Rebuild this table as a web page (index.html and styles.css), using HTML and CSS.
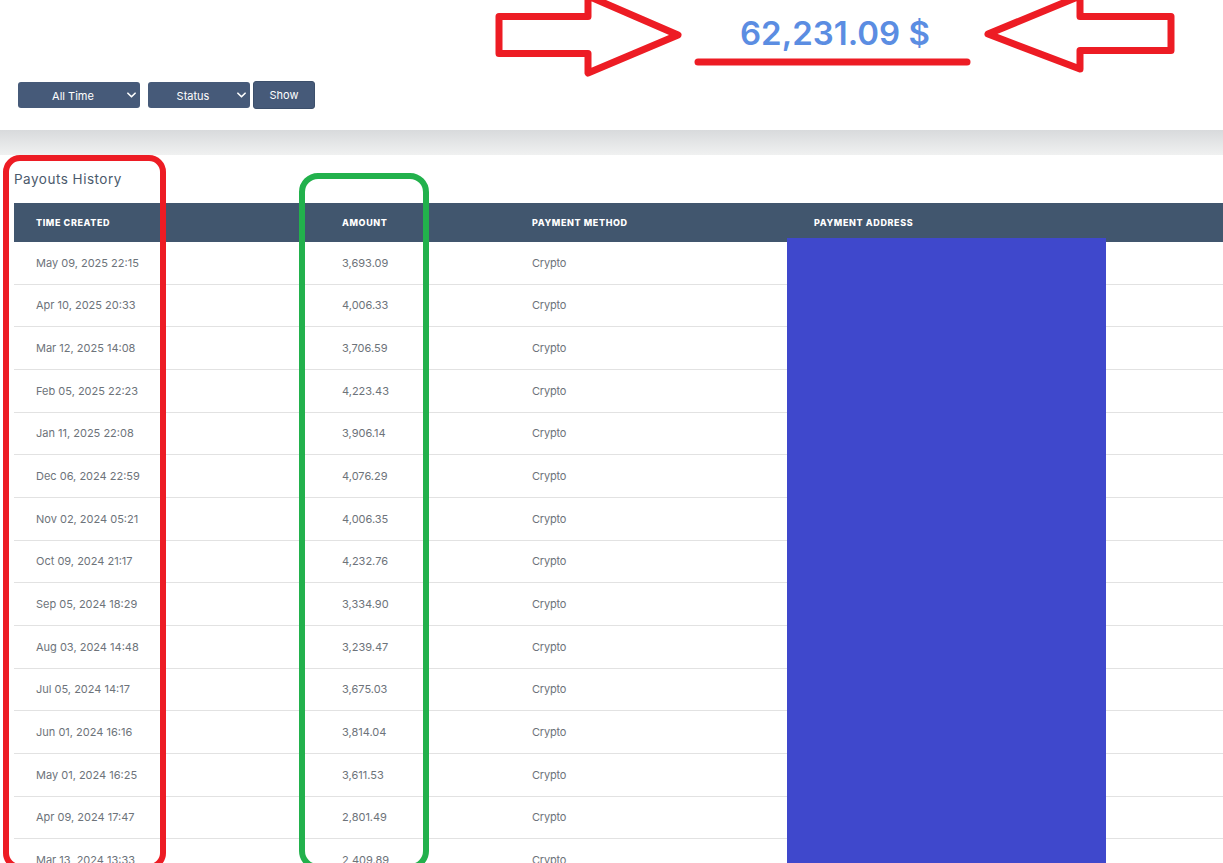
FILE: index.html
```html
<!DOCTYPE html>
<html>
<head>
<meta charset="utf-8">
<link rel="stylesheet" href="styles.css">
</head>
<body>
<div class="top">
  <div class="total-row"><span class="total">62,231.09 $</span></div>
  <div class="filters">
    <div class="select sel-time">All Time <svg class="chev" viewBox="0 0 10 6"><path d="M1 1l4 4 4-4" fill="none" stroke="#fff" stroke-width="1.8" stroke-linecap="round" stroke-linejoin="round"/></svg></div>
    <div class="select sel-status">Status <svg class="chev" viewBox="0 0 10 6"><path d="M1 1l4 4 4-4" fill="none" stroke="#fff" stroke-width="1.8" stroke-linecap="round" stroke-linejoin="round"/></svg></div>
    <button class="btn">Show</button>
  </div>
</div>
<div class="band"></div>
<div class="content">
  <h2 class="title">Payouts History</h2>
  <table class="tbl">
    <colgroup><col class="c1"><col class="c2"><col class="c3"><col></colgroup>
    <thead><tr><th>Time Created</th><th>Amount</th><th>Payment Method</th><th>Payment Address</th></tr></thead>
    <tbody>
      <tr><td>May 09, 2025 22:15</td><td>3,693.09</td><td class="m">Crypto</td><td></td></tr>
      <tr><td>Apr 10, 2025 20:33</td><td>4,006.33</td><td class="m">Crypto</td><td></td></tr>
      <tr><td>Mar 12, 2025 14:08</td><td>3,706.59</td><td class="m">Crypto</td><td></td></tr>
      <tr><td>Feb 05, 2025 22:23</td><td>4,223.43</td><td class="m">Crypto</td><td></td></tr>
      <tr><td>Jan 11, 2025 22:08</td><td>3,906.14</td><td class="m">Crypto</td><td></td></tr>
      <tr><td>Dec 06, 2024 22:59</td><td>4,076.29</td><td class="m">Crypto</td><td></td></tr>
      <tr><td>Nov 02, 2024 05:21</td><td>4,006.35</td><td class="m">Crypto</td><td></td></tr>
      <tr><td>Oct 09, 2024 21:17</td><td>4,232.76</td><td class="m">Crypto</td><td></td></tr>
      <tr><td>Sep 05, 2024 18:29</td><td>3,334.90</td><td class="m">Crypto</td><td></td></tr>
      <tr><td>Aug 03, 2024 14:48</td><td>3,239.47</td><td class="m">Crypto</td><td></td></tr>
      <tr><td>Jul 05, 2024 14:17</td><td>3,675.03</td><td class="m">Crypto</td><td></td></tr>
      <tr><td>Jun 01, 2024 16:16</td><td>3,814.04</td><td class="m">Crypto</td><td></td></tr>
      <tr><td>May 01, 2024 16:25</td><td>3,611.53</td><td class="m">Crypto</td><td></td></tr>
      <tr><td>Apr 09, 2024 17:47</td><td>2,801.49</td><td class="m">Crypto</td><td></td></tr>
      <tr><td>Mar 13, 2024 13:33</td><td>2,409.89</td><td class="m">Crypto</td><td></td></tr>
    </tbody>
  </table>
</div>

<div class="redact"></div>
<div class="mark mark-red"></div>
<div class="mark mark-green"></div>
<svg class="arrows" width="1223" height="90" viewBox="0 0 1223 90">
  <g fill="none" stroke="#ed1c24" stroke-width="7" stroke-linejoin="round" stroke-linecap="round">
    <polygon points="499,16.5 588,16.5 588,-4 678,35 588,73 588,53.5 499,53.5"/>
    <polygon points="988,34 1080,-4 1080,16.5 1171,16.5 1171,50.5 1080,50.5 1080,69"/>
    <line x1="698" y1="62" x2="967" y2="62"/>
  </g>
</svg>
</body>
</html>
```

FILE: styles.css
```css
html, body {
  margin: 0;
  padding: 0;
  overflow: hidden;
  background: #fff;
  font-family: "Inter", "Noto Sans", sans-serif;
}
body {
  position: relative;
  height: 863px;
}
.top {
  height: 130px;
  box-sizing: border-box;
}
.total-row {
  display: flex;
  justify-content: center;
  padding-left: 447px;
  padding-top: 13px;
  height: 40px;
}
.total {
  font-size: 33px;
  font-weight: 600;
  color: #5b8de2;
  line-height: 40px;
  letter-spacing: 0;
}
.filters {
  display: flex;
  align-items: center;
  gap: 0;
  padding-left: 18px;
  margin-top: 28px;
}
.select {
  position: relative;
  height: 26px;
  background: #465a79;
  border-radius: 3px;
  color: #fff;
  font-size: 11px;
  display: flex;
  align-items: center;
  justify-content: center;
  box-sizing: border-box;
  padding-right: 12px;
  padding-top: 2px;
}
.sel-time { width: 122px; margin-right: 8px; }
.sel-status { width: 102px; margin-right: 3px; }
.chev {
  position: absolute;
  right: 4px;
  top: 10px;
  width: 9px;
  height: 6px;
}
.btn {
  width: 62px;
  height: 28px;
  background: #465a79;
  border: 1px solid #3c4f6b;
  border-radius: 3px;
  color: #fff;
  font-family: inherit;
  font-size: 11px;
  padding: 0;
}
.band {
  height: 25px;
  background: linear-gradient(#d8dadc, #f0f1f1);
}
.content {
  padding-left: 14px;
}
.title {
  margin: 0;
  padding-top: 16px;
  height: 48px;
  box-sizing: border-box;
  font-size: 13.5px;
  font-weight: 400;
  color: #4b5a6c;
  letter-spacing: 0.5px;
  line-height: 17px;
}
.tbl {
  width: 100%;
  border-collapse: collapse;
  table-layout: fixed;
}
.c1 { width: 306px; }
.c2 { width: 190px; }
.c3 { width: 282px; }
.tbl th {
  background: #41566e;
  color: #fff;
  height: 39px;
  padding: 0 0 0 22px;
  text-align: left;
  font-size: 9px;
  font-weight: 800;
  text-transform: uppercase;
  letter-spacing: 0.6px;
}
.tbl td {
  height: 41.67px;
  padding: 0 0 0 22px;
  border-bottom: 1px solid #e2e2e2;
  font-size: 11px;
  color: #6d737a;
}
.tbl td.m {
  font-size: 11px;
  letter-spacing: -0.2px;
}
.redact {
  position: absolute;
  left: 787px;
  top: 238px;
  width: 319px;
  height: 640px;
  background: #3f48cc;
}
.mark {
  position: absolute;
  box-sizing: border-box;
  border-style: solid;
  border-width: 6px;
}
.mark-red {
  left: 3px;
  top: 155px;
  width: 163px;
  height: 715px;
  border-color: #ed1c24;
  border-radius: 17px;
}
.mark-green {
  left: 299px;
  top: 173px;
  width: 130px;
  height: 697px;
  border-color: #22b14c;
  border-radius: 19px;
}
.arrows {
  position: absolute;
  left: 0;
  top: 0;
}
```
